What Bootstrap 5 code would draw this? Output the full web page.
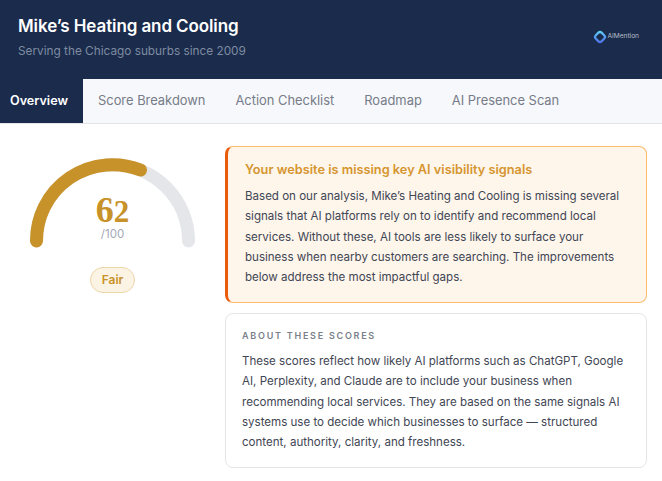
<!DOCTYPE html>
<html lang="en">
<head>
<meta charset="UTF-8" />
<title>Mike's Heating and Cooling</title>
<link href="https://cdn.jsdelivr.net/npm/bootstrap@5.3.0/dist/css/bootstrap.min.css" rel="stylesheet" />
<style>
  body { font-family: "Inter", "Noto Sans", sans-serif; color: #3f4654; background: #fff; overflow: hidden; }
  .top-head { background: #1a2b4c; height: 79px; padding: 15px 23px 0 18px; }
  .top-head h1 { font-size: 17px; font-weight: 600; color: #fff; margin: 0 0 5px; line-height: 22px; letter-spacing: -0.1px; }
  .top-head p { font-size: 11.8px; color: #7f8ba1; margin: 0; line-height: 18px; }
  .brand-mark { font-size: 6.6px; color: #b8bdc8; margin-top: 14px; height: 16px; }
  .tab-bar { height: 45px; border-bottom: 1px solid #e2e4e8; background: #f7f8fc; }
  .tab-item { padding: 0 15px; font-size: 12.9px; line-height: 44px; color: #767c88; white-space: nowrap; }
  .tab-item.active-tab { background: #1a2b4c; color: #fff; font-weight: 600; font-size: 12.6px; width: 83px; padding: 0 0 0 10px; }
  .page-body { padding: 22px 15px 0 0; }
  .gauge-col { width: 225px; flex: none; }
  .gauge-wrap { width: 180px; height: 105px; }
  .gauge-label { position: absolute; left: 0; right: 0; top: 49px; text-align: center; }
  .score-num { font-family: "Liberation Serif", serif; font-size: 36px; font-weight: 700; color: #c8922a; line-height: 30px; }
  .score-low { font-size: 31px; }
  .score-max { font-size: 11.5px; color: #a3a9b5; line-height: 15px; }
  .fair-pill { background: #fbf3e3; border: 1px solid #ecd6a8; color: #c8922a; font-size: 12px; font-weight: 600; border-radius: 13px; padding: 0 11px; line-height: 24px; margin-top: 16px; }
  .alert-box { background: #fef5eb; border: 1px solid #fbbb6a; border-left: 3px solid #ea5b0c; border-radius: 8px; padding: 14px 16px 14px 17px; height: 157px; }
  .alert-box h2 { font-size: 12.75px; font-weight: 600; color: #d6952f; margin: 0 0 7px; line-height: 18px; }
  .alert-box p, .about-box p { font-size: 11.55px; line-height: 20.3px; margin: 0; }
  .about-box { border: 1px solid #e4e5e8; border-radius: 8px; padding: 15px 16px; height: 155px; margin-top: 10px; }
  .about-box h3 { font-size: 9px; letter-spacing: 1.75px; font-weight: 600; color: #7a7f8a; margin: 0 0 8px; line-height: 14px; }
</style>
</head>
<body>
  <header class="top-head d-flex justify-content-between align-items-start">
    <div>
      <h1>Mike’s Heating and Cooling</h1>
      <p>Serving the Chicago suburbs since 2009</p>
    </div>
    <div class="brand-mark d-flex align-items-center">
      <svg width="14" height="14" viewBox="0 0 14 14"><defs><linearGradient id="lg" x1="0" y1="0" x2="1" y2="1"><stop offset="0" stop-color="#5fd0f5"/><stop offset="1" stop-color="#4f6fe8"/></linearGradient></defs><rect x="2.8" y="2.8" width="8.4" height="8.4" rx="2.6" transform="rotate(45 7 7)" fill="none" stroke="url(#lg)" stroke-width="2.2"/></svg>
      <span>AIMention</span>
    </div>
  </header>
  <nav class="tab-bar d-flex">
    <div class="tab-item active-tab">Overview</div>
    <div class="tab-item">Score Breakdown</div>
    <div class="tab-item">Action Checklist</div>
    <div class="tab-item">Roadmap</div>
    <div class="tab-item">AI Presence Scan</div>
  </nav>
  <main class="page-body d-flex">
    <div class="gauge-col d-flex flex-column align-items-center">
      <div class="gauge-wrap position-relative">
        <svg width="180" height="105" viewBox="0 0 180 105" class="d-block">
          <path d="M13.5 95 A76 76 0 0 1 165.5 95" fill="none" stroke="#e5e6ea" stroke-width="13" stroke-linecap="round"/>
          <path d="M13.5 95 A76 76 0 0 1 117.5 24" fill="none" stroke="#c8922a" stroke-width="13" stroke-linecap="round"/>
        </svg>
        <div class="gauge-label">
          <div class="score-num">6<span class="score-low">2</span></div>
          <div class="score-max">/100</div>
        </div>
      </div>
      <div class="fair-pill">Fair</div>
    </div>
    <div class="flex-grow-1">
      <section class="alert-box">
        <h2>Your website is missing key AI visibility signals</h2>
        <p>Based on our analysis, Mike’s Heating and Cooling is missing several signals that AI platforms rely on to identify and recommend local services. Without these, AI tools are less likely to surface your business when nearby customers are searching. The improvements below address the most impactful gaps.</p>
      </section>
      <section class="about-box">
        <h3>ABOUT THESE SCORES</h3>
        <p>These scores reflect how likely AI platforms such as ChatGPT, Google AI, Perplexity, and Claude are to include your business when recommending local services. They are based on the same signals AI systems use to decide which businesses to surface — structured content, authority, clarity, and freshness.</p>
      </section>
    </div>
  </main>
</body>
</html>
